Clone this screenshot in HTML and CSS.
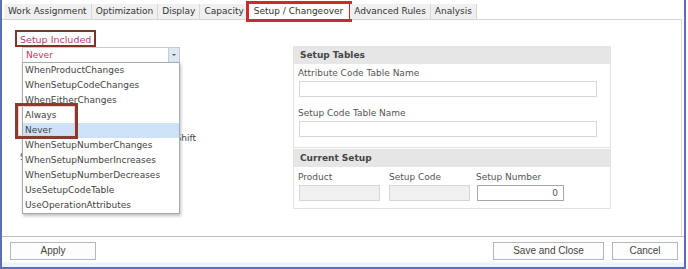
FILE: index.html
```html
<!DOCTYPE html>
<html>
<head>
<meta charset="utf-8">
<link rel="stylesheet" href="styles.css">
</head>
<body>
<div class="window">
  <div class="tabs">
    <div class="tab">Work Assignment</div>
    <div class="tab">Optimization</div>
    <div class="tab">Display</div>
    <div class="tab">Capacity</div>
    <div class="tab active">Setup / Changeover</div>
    <div class="tab">Advanced Rules</div>
    <div class="tab">Analysis</div>
  </div>
  <div class="panel">
    <div class="left">
      <div class="label-box">Setup Included</div>
      <div class="select-wrap">
        <div class="select">
          <span class="select-value">Never</span>
          <span class="select-btn"><span class="arrow"></span></span>
        </div>
        <div class="dropdown">
          <div class="opt">WhenProductChanges</div>
          <div class="opt">WhenSetupCodeChanges</div>
          <div class="opt">WhenEitherChanges</div>
          <div class="opt">Always</div>
          <div class="opt selected">Never</div>
          <div class="opt">WhenSetupNumberChanges</div>
          <div class="opt">WhenSetupNumberIncreases</div>
          <div class="opt">WhenSetupNumberDecreases</div>
          <div class="opt">UseSetupCodeTable</div>
          <div class="opt">UseOperationAttributes</div>
          <div class="mark"></div>
        </div>
      </div>
      <div class="hidden-row row1">Shift</div>
      <div class="hidden-row row2">S</div>
    </div>
    <div class="right">
      <div class="group">
        <div class="group-head">Setup Tables</div>
        <div class="group-body">
          <div class="field-label">Attribute Code Table Name</div>
          <div class="input wide"></div>
          <div class="field-label">Setup Code Table Name</div>
          <div class="input wide"></div>
        </div>
      </div>
      <div class="group">
        <div class="group-head">Current Setup</div>
        <div class="group-body cols">
          <div class="col c1">
            <div class="field-label">Product</div>
            <div class="input small disabled"></div>
          </div>
          <div class="col c2">
            <div class="field-label">Setup Code</div>
            <div class="input small disabled"></div>
          </div>
          <div class="col c3">
            <div class="field-label">Setup Number</div>
            <div class="input num">0</div>
          </div>
        </div>
      </div>
    </div>
  </div>
  <div class="footer">
    <div class="btn apply">Apply</div>
    <div class="spacer"></div>
    <div class="btn save">Save and Close</div>
    <div class="btn cancel">Cancel</div>
  </div>
</div>
</body>
</html>
```
FILE: styles.css
```css
* { box-sizing: border-box; }
html, body { margin: 0; padding: 0; background: #fff; }
body {
  font-family: "DejaVu Sans", Verdana, sans-serif;
  font-size: 9px;
  color: #444;
  width: 688px;
  height: 269px;
  overflow: hidden;
}
.window {
  width: 686px;
  height: 269px;
  border-left: 2px solid #5d6eb6;
  border-right: 2px solid #5d6eb6;
  border-bottom: 2px solid #5d6eb6;
  display: flex;
  flex-direction: column;
  background: #fff;
}
.tabs {
  margin-top: 4px;
  padding-left: 2px;
  display: flex;
  height: 16px;
  border-bottom: 1px solid #d4d4d4;
  margin-right: 2px;
}
.tab {
  position: relative;
  height: 15px;
  line-height: 15px;
  padding: 0 4px;
  background: #f0f0f0;
  border-right: 1px solid #d6d6d6;
  color: #333;
  white-space: nowrap;
}
.tab.active {
  background: #fff;
  padding: 0 6px 0 5px;
}
.tab.active::after {
  content: "";
  position: absolute;
  left: -3px;
  right: -3px;
  top: -3px;
  bottom: -3px;
  border: 3px solid #cc2a2f;
}
.panel {
  flex: 1;
  display: flex;
  border-right: 1px solid #dadada;
  margin-right: 2px;
  position: relative;
}
.left {
  width: 291px;
  padding: 10px 0 0 13px;
  position: relative;
}
.label-box {
  display: inline-block;
  border: 2px solid #7d3526;
  padding: 2px 3px 1px 3px;
  color: #b8406c;
  font-size: 9.5px;
  height: 17px;
  line-height: 12px;
}
.select-wrap {
  position: relative;
  margin-left: 7px;
  width: 158px;
  z-index: 2;
}
.select {
  height: 16px;
  border: 1px solid #c9c9c9;
  display: flex;
  background: #fff;
}
.select-value {
  flex: 1;
  color: #c3365f;
  padding-left: 3px;
  line-height: 14px;
}
.select-btn {
  width: 11px;
  background: #dde8f5;
  border-left: 1px solid #c0cfe0;
  display: flex;
  align-items: center;
  justify-content: center;
}
.arrow {
  width: 0; height: 0;
  border-left: 2px solid transparent;
  border-right: 2px solid transparent;
  border-top: 2px solid #555;
}
.dropdown {
  position: absolute;
  top: 15px;
  left: 0;
  width: 158px;
  height: 152px;
  background: #fff;
  border: 1px solid #aaa;
  box-shadow: 1px 2px 3px rgba(0,0,0,0.25);
}
.opt {
  height: 15px;
  line-height: 15px;
  padding-left: 2px;
  color: #444;
  white-space: nowrap;
}
.opt.selected { background: #cde2f6; }
.mark {
  position: absolute;
  left: -8px;
  top: 40px;
  width: 63px;
  height: 36px;
  border: 3px solid #8a3b2b;
  box-shadow: inset 0 0 0 1px #f2c9d6;
}
.hidden-row {
  position: relative;
  white-space: nowrap;
  color: #444;
  z-index: 1;
  line-height: 12px;
}
.row1 { margin-top: 69px; width: 181px; text-align: right; }
.row2 { margin-top: 7px; padding-left: 5px; }
.right {
  padding-top: 26px;
  width: 318px;
  display: flex;
  flex-direction: column;
  gap: 1px;
}
.group {
  border: 1px solid #e2e2e2;
  width: 318px;
}
.group-head {
  height: 17px;
  line-height: 17px;
  background: #e6e6e6;
  font-weight: bold;
  color: #444;
  padding-left: 6px;
}
.group-body {
  padding: 3px 13px 8px 4px;
}
.field-label {
  color: #555;
  line-height: 12px;
  margin-bottom: 2px;
}
.input {
  height: 16px;
  border: 1px solid #d6d6d6;
  background: #fff;
}
.input.wide { width: 298px; margin-bottom: 10px; margin-left: 1px; }
.input.wide:last-child { margin-bottom: 2px; }
.cols { display: flex; padding-top: 4px; padding-bottom: 7px; }
.c1 { margin-right: 9px; }
.c2 { margin-right: 6px; }
.c3 { }
.input.small { width: 81px; }
.c1 .input { margin-left: 1px; }
.c3 .input { margin-left: 1px; }
.input.disabled { background: #f0f0f0; }
.input.num {
  width: 87px;
  border-color: #a8a8a8;
  text-align: right;
  padding-right: 5px;
  line-height: 14px;
  color: #555;
}
.footer {
  height: 31px;
  border-top: 1px solid #bdbdbd;
  display: flex;
  align-items: flex-start;
  padding: 5px 6px 0 8px;
  background: linear-gradient(#fff 0, #fff 25px, #e8f6fb 26px);
}
.spacer { flex: 1; }
.btn {
  height: 18px;
  line-height: 16px;
  border: 1px solid #b6b6b6;
  background: #fdfdfd;
  text-align: center;
  font-family: "Liberation Sans", Arial, sans-serif;
  font-size: 10px;
  color: #444;
}
.apply { width: 86px; }
.save { width: 111px; margin-right: 8px; }
.cancel { width: 66px; }
```
